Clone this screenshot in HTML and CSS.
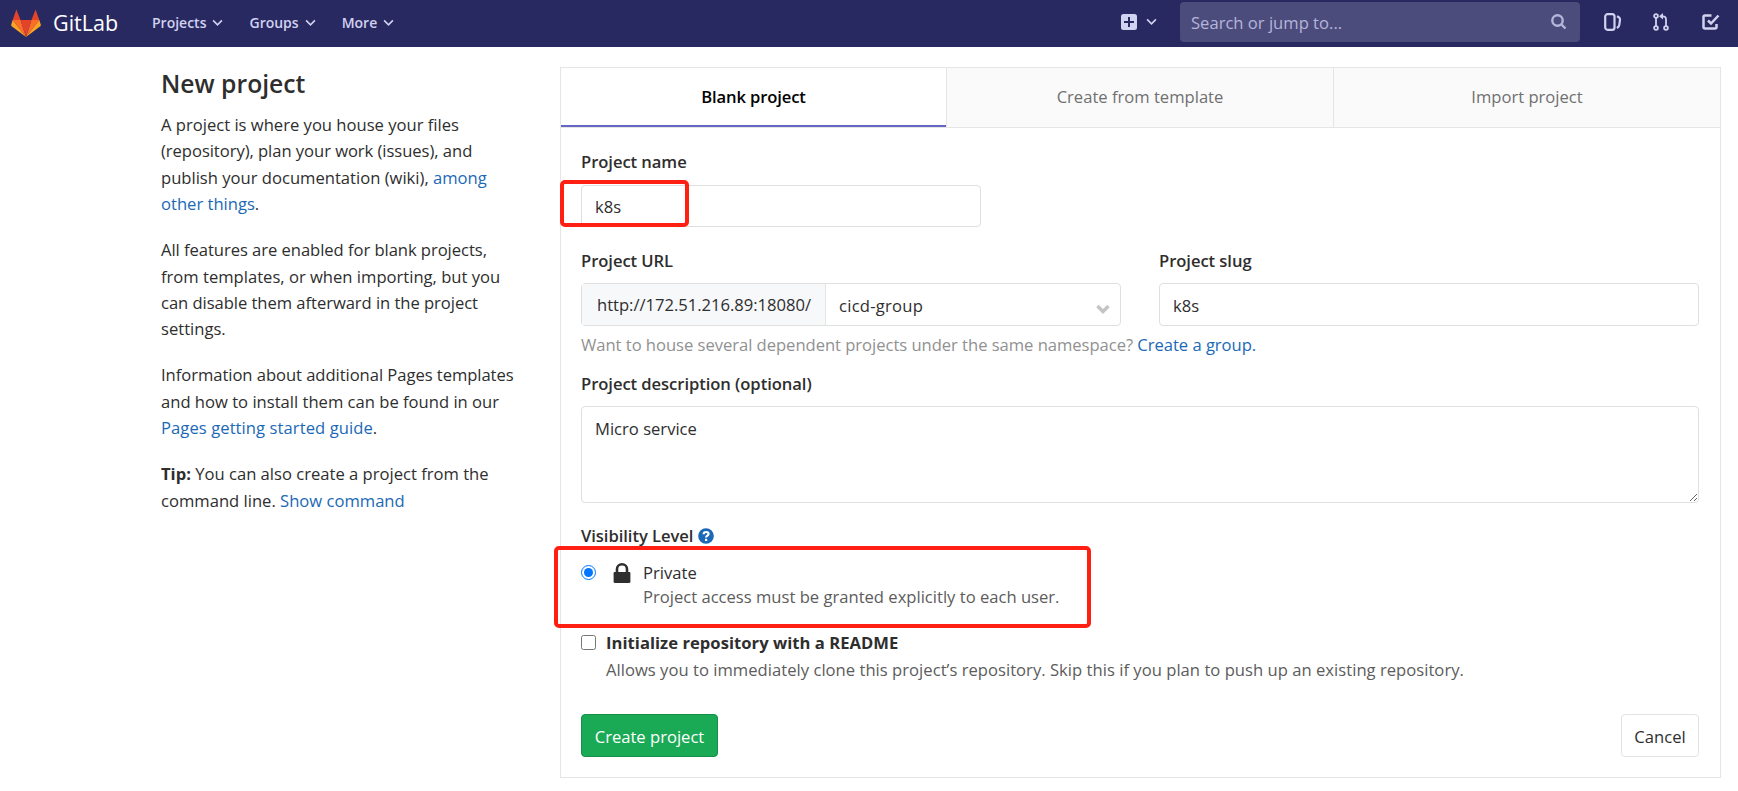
FILE: index.html
```html
<!DOCTYPE html>
<html lang="en">
<head>
<meta charset="utf-8">
<title>New project · GitLab</title>
<link rel="stylesheet" href="styles.css">
</head>
<body>
<header class="navbar">
  <a class="brand">
    <svg class="logo" viewBox="0 0 36 33" preserveAspectRatio="none">
      <path fill="#e24329" d="M2 13 6.500.5 11.500 13zM34 13 29.500.5 24.500 13z"/>
      <path fill="#fc6d26" d="M18 33 2 13h9.500zM18 33 34 13h-9.500z"/>
      <path fill="#e24329" d="M18 33 11.500 13h13z"/>
      <path fill="#fca326" d="M2 13 .2 18.500c-.2.700 0 1.300.6 1.800L18 33zM34 13l1.800 5.500c.2.700 0 1.300-.6 1.800L18 33z"/>
    </svg>
    <span class="wordmark">GitLab</span>
  </a>
  <nav class="menu">
    <a class="menu-item">Projects<svg class="caret" viewBox="0 0 12 8"><path d="m1.200 1.200 4.800 4.800 4.800-4.800"/></svg></a>
    <a class="menu-item">Groups<svg class="caret" viewBox="0 0 12 8"><path d="m1.200 1.200 4.800 4.800 4.800-4.800"/></svg></a>
    <a class="menu-item">More<svg class="caret" viewBox="0 0 12 8"><path d="m1.200 1.200 4.800 4.800 4.800-4.800"/></svg></a>
  </nav>
  <div class="tools">
    <a class="new-menu">
      <svg class="icon" viewBox="0 0 16 16"><path fill-rule="evenodd" d="M2.500 0h11A2.500 2.500 0 0 1 16 2.500v11a2.500 2.500 0 0 1-2.500 2.500h-11A2.500 2.500 0 0 1 0 13.500v-11A2.500 2.500 0 0 1 2.500 0zM7 3v4H3v2h4v4h2V9h4V7H9V3z"/></svg>
      <svg class="caret" viewBox="0 0 12 8"><path d="m1.200 1.200 4.800 4.800 4.800-4.800"/></svg>
    </a>
    <div class="search">
      <span class="search-text">Search or jump to...</span>
      <svg class="icon-search" viewBox="0 0 16 16"><circle cx="6.500" cy="6.500" r="5.200"/><path d="m10.500 10.500 4 4"/></svg>
    </div>
    <svg class="icon-issues" viewBox="0 0 18 18"><rect x="1.200" y="1.200" width="9.300" height="15.600" rx="2.400"/><path d="M13 3.200l1.500.8c1.200.7 1.700 1.500 1.500 2.800l-.7 5c-.2 1.300-.9 2.200-2.300 3.400"/></svg>
    <svg class="icon-merge" viewBox="0 0 16 18"><circle cx="3" cy="3" r="1.900"/><circle cx="3" cy="15" r="1.900"/><circle cx="13" cy="15" r="1.900"/><path d="M3 5v8M13 13V6.500C13 4.300 12 3.300 10 3.300H8.500"/><path class="arrow" d="M10 0v6.400L6 3.200z"/></svg>
    <svg class="icon-todo" viewBox="0 0 18 16"><path d="M9.500 1.500H2.800a1.300 1.300 0 0 0-1.300 1.300v10.400a1.300 1.300 0 0 0 1.300 1.300h10.400a1.300 1.300 0 0 0 1.300-1.300V10"/><path d="M6 6.500 9 9.500 16.500 1.500"/></svg>
  </div>
</header>
<main class="page">
  <aside class="intro">
    <h1 class="title">New project</h1>
    <p>A project is where you house your files<br><span class="tight">(repository), plan your work (issues), and</span><br>publish your documentation (wiki), <a>among</a><br><a>other things</a>.</p>
    <p><span class="tight">All features are enabled for blank projects,</span><br>from templates, or when importing, but you<br><span class="tight">can disable them afterward in the project</span><br>settings.</p>
    <p><span class="tight">Information about additional Pages templates</span><br>and how to install them can be found in our<br><a class="loose">Pages getting started guide</a>.</p>
    <p><b>Tip:</b> You can also create a project from the<br>command line. <a>Show command</a></p>
  </aside>
  <section class="panel">
    <div class="tabs">
      <a class="tab active">Blank project</a>
      <a class="tab">Create from template</a>
      <a class="tab">Import project</a>
    </div>
    <form class="form">
      <label>Project name</label>
      <div class="name-field">
        <input class="control name" value="k8s">
        <i class="mark mark-name"></i>
      </div>
      <div class="row">
        <div class="col">
          <label>Project URL</label>
          <div class="input-group">
            <span class="addon">http://172.51.216.89:18080/</span>
            <span class="select"><span class="namespace">cicd-group</span><svg class="select-caret" viewBox="0 0 14 10"><path d="m1.500 2 5.500 5.500 5.500-5.500"/></svg></span>
          </div>
        </div>
        <div class="col">
          <label>Project slug</label>
          <input class="control" value="k8s">
        </div>
      </div>
      <p class="help">Want to house several dependent projects under the same namespace? <a>Create a group.</a></p>
      <label class="desc-label">Project description (optional)</label>
      <textarea class="control desc">Micro service</textarea>
      <label class="vis-label">Visibility Level<svg class="help-icon" viewBox="0 0 16 16"><circle cx="8" cy="8" r="7.800" fill="#1b69b6"/><path d="M5.600 6.200C5.700 4.700 6.700 4 8.100 4c1.500 0 2.500.8 2.500 2 0 1.600-2.500 1.700-2.500 3.500" fill="none" stroke="#fff" stroke-width="2.200"/><rect x="7" y="10.800" width="2.200" height="2.200" fill="#fff"/></svg></label>
      <div class="visibility">
        <input class="choice" type="radio" checked>
        <svg class="lock" viewBox="0 0 18 20"><path fill="#2e2e2e" d="M1.800 9h14.400c.7 0 1.200.5 1.200 1.200v8.600c0 .7-.5 1.200-1.200 1.200H1.800c-.7 0-1.200-.5-1.200-1.200v-8.600C.6 9.500 1.100 9 1.800 9z"/><path fill="none" stroke="#2e2e2e" stroke-width="2.600" d="M4 10V6a5 4.700 0 0 1 10 0V10"/></svg>
        <div class="choice-text">
          <div class="private">Private</div>
          <div class="muted">Project access must be granted explicitly to each user.</div>
        </div>
        <i class="mark mark-visibility"></i>
      </div>
      <div class="readme">
        <input class="choice" type="checkbox">
        <div class="choice-text">
          <div class="strong">Initialize repository with a README</div>
          <div class="muted wide">Allows you to immediately clone this project’s repository. Skip this if you plan to push up an existing repository.</div>
        </div>
      </div>
      <div class="actions">
        <button class="btn create" type="button">Create project</button>
        <button class="btn cancel" type="button">Cancel</button>
      </div>
    </form>
  </section>
</main>
</body>
</html>
```
FILE: styles.css
```css
* { box-sizing: border-box; }
body {
  margin: 0;
  background: #fff;
  color: #2e2e2e;
  font-family: "Open Sans", "Noto Sans", sans-serif;
  font-size: 16.6px;
  line-height: 26.4px;
}
a { color: #1b69b6; text-decoration: none; }
svg { display: block; flex: none; }
.tight { letter-spacing: -0.05px; }
.loose { letter-spacing: 0.07px; }

/* Top bar */
.navbar {
  display: flex;
  align-items: center;
  height: 47px;
  padding: 0 18px 0 11px;
  background: #292961;
}
.brand { display: flex; align-items: center; height: 40px; color: #fff; }
.logo { width: 30px; height: 28px; margin-top: -2px; }
.wordmark { width: 65px; margin-left: 12px; margin-top: -1px; font-size: 21.5px; }
.menu { display: flex; margin-left: 34px; }
.menu-item { display: flex; align-items: center; margin-right: 26px; color: #d1d1f0; font-size: 14px; font-weight: 600; }
.menu-item .caret { margin-left: 6px; margin-top: -2px; }
.caret { width: 11px; height: 8px; fill: none; stroke: #d1d1f0; stroke-width: 1.8; }
.tools { display: flex; align-items: center; margin-left: auto; margin-top: -3px; }
.new-menu { display: flex; align-items: center; gap: 9px; margin-right: 23px; }
.icon { width: 16px; height: 16px; fill: #d1d1f0; }
.search {
  display: flex;
  align-items: center;
  justify-content: space-between;
  width: 400px;
  height: 40px;
  padding: 0 13px 0 11px;
  border-radius: 4px;
  background: #4c4c7c;
  color: #b5b5db;
}
.search-text { padding-top: 3px; }
.icon-search { width: 16px; height: 16px; fill: none; stroke: #b5b5db; stroke-width: 2.4; }
.icon-issues, .icon-merge, .icon-todo { fill: none; stroke: #d1d1f0; stroke-width: 2.2; }
.icon-issues { width: 18px; height: 18px; margin-left: 24px; }
.icon-merge { width: 16px; height: 18px; margin-left: 31px; stroke-width: 1.8; }
.icon-merge .arrow { fill: #d1d1f0; stroke: none; }
.icon-todo { width: 18px; height: 16px; margin-left: 33px; stroke-width: 2.5; }

/* Page columns */
.page { display: grid; grid-template-columns: 360px 1161px; column-gap: 39px; padding: 20px 17px 0 161px; }
.title { margin: 0 0 12px; font-size: 24.7px; font-weight: 600; line-height: 33px; }
.intro p { margin: 0 0 19.6px; white-space: nowrap; }

.panel { height: 711px; border: 1px solid #e5e5e5; }
.tabs { display: grid; grid-template-columns: 385px 387px 387px; height: 60px; border-bottom: 1px solid #e5e5e5; }
.tab { display: flex; align-items: center; justify-content: center; background: #fafafa; color: #707070; }
.tab + .tab { border-left: 1px solid #e5e5e5; }
.tab.active { padding-top: 1px; border-bottom: 2px solid #6666c4; background: #fff; color: #000; font-weight: 600; letter-spacing: -0.12px; }

/* Form */
.form { padding: 21px 21px 0 20px; }
label { display: block; height: 26px; font-weight: 600; letter-spacing: -0.06px; }
.control {
  display: block;
  width: 100%;
  height: 43px;
  padding: 2px 13px 0;
  border: 1px solid #dfdfdf;
  border-radius: 4px;
  background: #fff;
  color: #2e2e2e;
  font: inherit;
  outline: 0;
}
.name-field { position: relative; width: 400px; margin-top: 10px; }
.control.name { height: 42px; padding-top: 0; }
.mark { position: absolute; border: 4px solid #ff2013; border-radius: 5px; }
.mark-name { left: -21px; top: -5px; width: 129px; height: 47px; }
.row { display: grid; grid-template-columns: 540px 540px; column-gap: 38px; margin-top: 21px; }
.row label { margin-bottom: 9px; }
.input-group { display: flex; height: 43px; border: 1px solid #dfdfdf; border-radius: 4px; }
.addon { display: flex; align-items: center; width: 244px; padding: 2px 0 0 15px; border-right: 1px solid #e5e5e5; background: #f7f8fa; letter-spacing: -0.02px; }
.select { display: flex; flex: 1; align-items: center; justify-content: space-between; padding: 3px 10px 0 13px; }
.namespace { letter-spacing: 0.25px; }
.select-caret { width: 14px; height: 10px; margin-top: 6px; fill: none; stroke: #c4c4c4; stroke-width: 3.5; }
.help { margin: 6px 0 0; color: #919191; letter-spacing: -0.035px; white-space: nowrap; }
.desc-label { margin-top: 13px; }
.control.desc { height: 97px; margin-top: 9px; padding: 9px 13px; }
.vis-label { display: flex; align-items: center; gap: 5px; margin-top: 20px; }
.help-icon { width: 16px; height: 16px; }
.visibility { position: relative; display: flex; height: 60px; margin-top: 11px; }
.choice { flex: none; width: 15px; height: 15px; margin: 5px 0 0; }
.lock { width: 18px; height: 20px; margin: 3px 12px 0 17px; }
.private { height: 24px; }
.muted { color: #5c5c5c; white-space: nowrap; }
.muted.wide { letter-spacing: 0.025px; }
.mark-visibility { left: -27px; top: -14px; width: 537px; height: 82px; }
.readme { display: flex; gap: 10px; margin-top: 10px; }
.strong { font-weight: 700; letter-spacing: 0.03px; }
.actions { display: flex; justify-content: space-between; margin-top: 31px; }
.btn { height: 43px; padding: 2px 0 0; border-radius: 4px; font: inherit; }
.create { width: 137px; border: 1px solid #168f48; background: #1aaa55; color: #fff; }
.cancel { width: 78px; border: 1px solid #e3e3e3; background: #fff; color: #2e2e2e; }
```
